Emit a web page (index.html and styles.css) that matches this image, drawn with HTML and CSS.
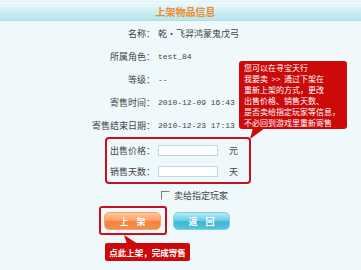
FILE: index.html
```html
<!DOCTYPE html>
<html lang="zh">
<head>
<meta charset="utf-8">
<link rel="stylesheet" href="styles.css">
</head>
<body>
<div class="page">
  <div class="header"><span class="title">上架物品信息</span></div>
  <div class="info">
    <div class="row"><span class="lbl">名称：</span><span class="val">乾・飞羿鸿蒙鬼戊弓</span></div>
    <div class="row"><span class="lbl">所属角色：</span><span class="val mono">test_84</span></div>
    <div class="row"><span class="lbl">等级：</span><span class="val mono">--</span></div>
    <div class="row"><span class="lbl">寄售时间：</span><span class="val mono">2010-12-09 16:43</span></div>
    <div class="row"><span class="lbl">寄售结束日期：</span><span class="val mono">2010-12-23 17:13</span></div>
  </div>
  <div class="sell-box">
    <div class="sell-row"><span class="lbl">出售价格：</span><span class="input"></span><span class="unit">元</span></div>
    <div class="sell-row"><span class="lbl">销售天数：</span><span class="input"></span><span class="unit">天</span></div>
  </div>
  <div class="check-row"><span class="checkbox"></span><span class="check-label">卖给指定玩家</span></div>
  <div class="actions">
    <div class="frame"><span class="btn btn-orange">上 架</span></div>
    <span class="btn btn-blue">返 回</span>
    <svg class="callout-tail" width="16" height="10" viewBox="0 0 16 10"><polygon points="0,0 3,9 14,9" fill="#cc0a0a"/></svg>
    <div class="callout">点此上架，完成寄售</div>
  </div>
  <div class="tip">
    <div>您可以在寻宝天行</div>
    <div>我要卖&nbsp;&nbsp;&gt;&gt;&nbsp;&nbsp;通过下架在</div>
    <div>重新上架的方式，更改</div>
    <div>出售价格、销售天数、</div>
    <div>是否卖给指定玩家等信息，</div>
    <div>不必回到游戏里重新寄售</div>
    <svg class="tip-tail" width="16" height="12" viewBox="0 0 16 12"><polygon points="3,0 15,0 0,11" fill="#cc0a0a"/></svg>
  </div>
</div>
</body>
</html>
```

FILE: styles.css
```css
html, body {
  margin: 0;
  padding: 0;
  background: #eff9fc;
}
.page {
  position: relative;
  width: 361px;
  height: 270px;
  overflow: hidden;
  font-family: "Noto Sans CJK SC", "Noto Sans", sans-serif;
  font-size: 9px;
  color: #444;
}
.header {
  margin-top: 1px;
  height: 18px;
  border-top: 1px solid #dff3f7;
  border-bottom: 1px solid #addfe9;
  background: linear-gradient(#eefafc, #d3f0f5 45%, #b6e5ee);
  display: flex;
  align-items: center;
  justify-content: center;
}
.title {
  color: #f08a2a;
  font-weight: bold;
  font-size: 10px;
  padding-left: 10px;
}
.info {
  padding-top: 1px;
}
.row {
  display: grid;
  grid-template-columns: 155px auto;
  column-gap: 3px;
  height: 23px;
  align-items: center;
}
.lbl {
  text-align: right;
  white-space: nowrap;
}
.val {
  white-space: nowrap;
}
.mono {
  font-family: "Liberation Mono", "DejaVu Sans Mono", monospace;
  font-size: 8px;
}
.sell-box {
  margin-left: 105px;
  width: 146px;
  box-sizing: border-box;
  border: 2px solid #c8101e;
  border-radius: 4px;
  padding-top: 1px;
}
.sell-row {
  display: flex;
  align-items: center;
  height: 21px;
}
.sell-row .lbl {
  width: 48px;
}
.input {
  margin-left: 3px;
  width: 60px;
  height: 11px;
  box-sizing: border-box;
  background: #fff;
  border: 1px solid #bcd9e6;
}
.unit {
  margin-left: 11px;
}
.check-row {
  display: flex;
  align-items: center;
  height: 22px;
  padding-left: 161px;
}
.checkbox {
  width: 7px;
  height: 7px;
  border-top: 1px solid #7f7f7f;
  border-left: 1px solid #7f7f7f;
  border-right: 1px solid #f4f4f4;
  border-bottom: 1px solid #f4f4f4;
}
.check-label {
  margin-left: 4px;
}
.actions {
  position: relative;
  display: flex;
  align-items: flex-start;
  gap: 6px;
  margin-left: 99px;
}
.frame {
  border: 2px solid #c8101e;
  border-radius: 3px;
  padding: 4px 4px 3px 3px;
}
.btn {
  display: flex;
  align-items: center;
  justify-content: center;
  width: 57px;
  height: 18px;
  box-sizing: border-box;
  border-radius: 5px;
  color: #fff;
  font-weight: bold;
  font-size: 9px;
  word-spacing: 6px;
}
.btn-orange {
  background: linear-gradient(#ffc79a, #ffa062 45%, #f6823d 55%, #f39050);
  border: 1px solid #f1a577;
}
.btn-blue {
  margin-top: 6px;
  background: linear-gradient(#b5ebf4, #6fd0e6 45%, #3fb6d6 55%, #58c1dc);
  border: 1px solid #86cfe0;
}
.callout {
  position: absolute;
  left: 6px;
  top: 37px;
  width: 85px;
  height: 18px;
  box-sizing: border-box;
  background: #cc0a0a;
  border-radius: 2px;
  color: #fff;
  font-weight: bold;
  font-size: 8.5px;
  display: flex;
  align-items: center;
  justify-content: center;
}
.callout-tail {
  position: absolute;
  left: 25px;
  top: 29px;
}
.tip {
  position: absolute;
  left: 239px;
  top: 61px;
  width: 108px;
  height: 68px;
  box-sizing: border-box;
  padding: 1px 0 0 5px;
  background: #cc0a0a;
  border-radius: 3px;
  color: #fff;
  font-size: 8px;
  line-height: 11px;
  white-space: nowrap;
}
.tip-tail {
  position: absolute;
  left: 11px;
  top: 67px;
}
```
